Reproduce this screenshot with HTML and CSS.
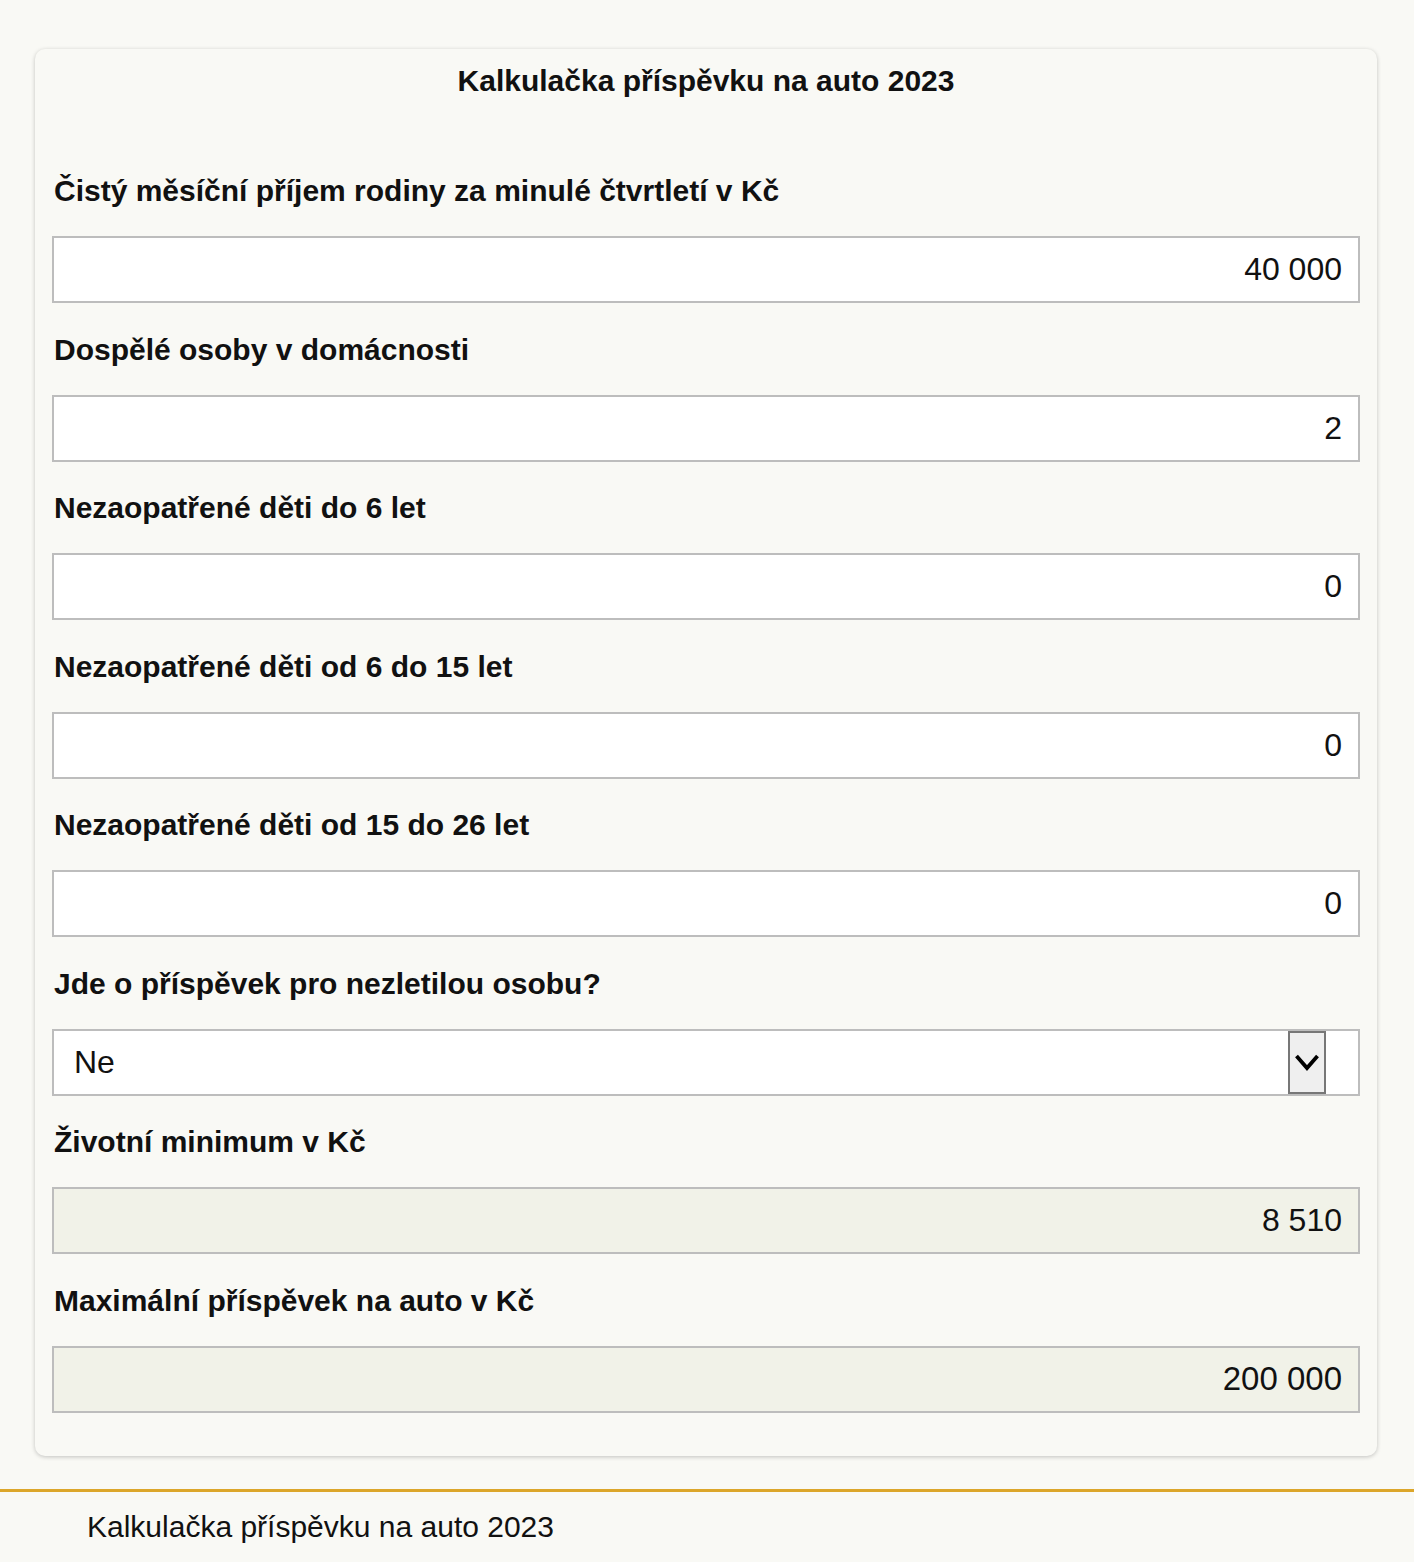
FILE: index.html
```html
<!DOCTYPE html>
<html lang="cs">
<head>
<meta charset="utf-8">
<title>Kalkulačka příspěvku na auto 2023</title>
<link rel="stylesheet" href="styles.css">
</head>
<body>
<main class="page">
  <section class="card">
    <h1 class="card-title">Kalkulačka příspěvku na auto 2023</h1>

    <div class="field">
      <label class="field-label" for="prijem">Čistý měsíční příjem rodiny za minulé čtvrtletí v Kč</label>
      <input class="field-input" id="prijem" type="text" value="40 000">
    </div>

    <div class="field">
      <label class="field-label" for="dospeli">Dospělé osoby v domácnosti</label>
      <input class="field-input" id="dospeli" type="text" value="2">
    </div>

    <div class="field">
      <label class="field-label" for="deti6">Nezaopatřené děti do 6 let</label>
      <input class="field-input" id="deti6" type="text" value="0">
    </div>

    <div class="field">
      <label class="field-label" for="deti15">Nezaopatřené děti od 6 do 15 let</label>
      <input class="field-input" id="deti15" type="text" value="0">
    </div>

    <div class="field">
      <label class="field-label" for="deti26">Nezaopatřené děti od 15 do 26 let</label>
      <input class="field-input" id="deti26" type="text" value="0">
    </div>

    <div class="field">
      <label class="field-label" for="nezletila">Jde o příspěvek pro nezletilou osobu?</label>
      <div class="select-wrap">
        <select class="field-select" id="nezletila">
          <option>Ne</option>
          <option>Ano</option>
        </select>
        <span class="select-arrow" aria-hidden="true">
          <svg width="26" height="20" viewBox="0 0 26 20"><polyline points="2.5,4 13,16 23.5,4" fill="none" stroke="#000" stroke-width="3.8"/></svg>
        </span>
      </div>
    </div>

    <div class="field">
      <label class="field-label" for="minimum">Životní minimum v Kč</label>
      <input class="field-input field-input--readonly" id="minimum" type="text" value="8 510" readonly>
    </div>

    <div class="field">
      <label class="field-label" for="maximum">Maximální příspěvek na auto v Kč</label>
      <input class="field-input field-input--readonly field-input--result" id="maximum" type="text" value="200 000" readonly>
    </div>
  </section>
</main>
<footer class="site-footer">
  <p class="site-footer-text">Kalkulačka příspěvku na auto 2023</p>
</footer>
</body>
</html>
```

FILE: styles.css
```css
* {
  box-sizing: border-box;
}

html, body {
  margin: 0;
  padding: 0;
  background: #f9f9f5;
  color: #111;
  font-family: "Liberation Sans", Arial, sans-serif;
}

.page {
  padding: 49px 37px 0 35px;
}

.card {
  background: #f9f9f5;
  border-radius: 10px;
  box-shadow: 0 1px 4px rgba(0, 0, 0, 0.22);
  padding: 14px 17px 43px 17px;
}

.card-title {
  margin: 0 0 74px 0;
  font-size: 30px;
  line-height: 36px;
  font-weight: bold;
  text-align: center;
}

.field + .field {
  margin-top: 28.5px;
}

.field-label {
  display: block;
  font-size: 30px;
  line-height: 36px;
  font-weight: bold;
  margin: 0 0 27px 2px;
}

.field-input,
.field-select {
  display: block;
  width: 100%;
  height: 67px;
  margin: 0;
  border: 2px solid #bdbdbd;
  border-radius: 0;
  background: #fff;
  color: #111;
  font-family: "Liberation Sans", Arial, sans-serif;
  font-size: 32px;
  outline: none;
}

.field-input {
  padding: 0 16px 0 16px;
  text-align: right;
}

.field-input--readonly {
  background: #f1f2e8;
}

.field-input--result {
  font-size: 33px;
}

.select-wrap {
  position: relative;
}

.field-select {
  appearance: none;
  -webkit-appearance: none;
  padding: 0 0 0 20px;
}

.select-arrow {
  position: absolute;
  top: 2px;
  bottom: 2px;
  right: 34px;
  width: 38px;
  background: #efefef;
  border: 2.5px solid #777;
  display: flex;
  align-items: center;
  justify-content: center;
  pointer-events: none;
}

.site-footer {
  margin-top: 33px;
  border-top: 3.5px solid #dca62a;
  padding: 17px 0 20px 87px;
}

.site-footer-text {
  margin: 0;
  font-size: 30px;
  line-height: 36px;
}
```
